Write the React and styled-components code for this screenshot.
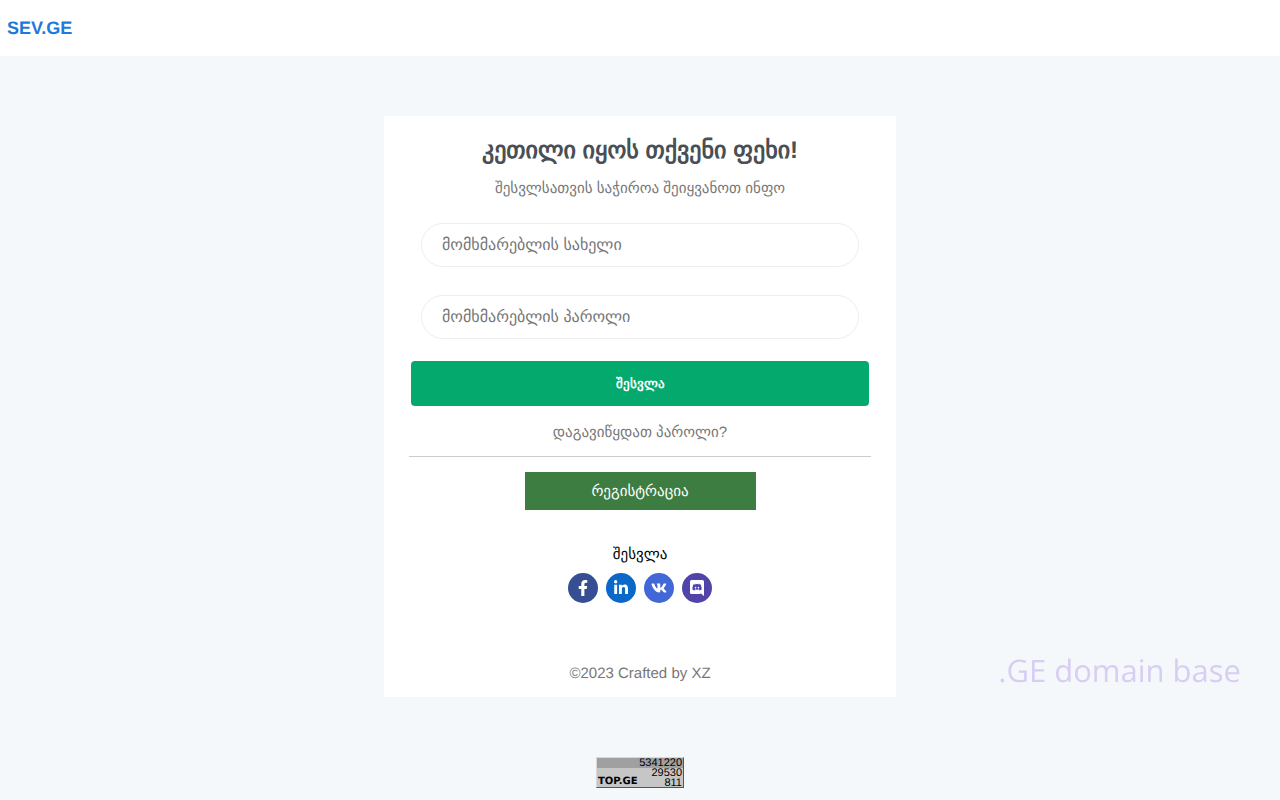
import styled, { createGlobalStyle } from 'styled-components';
import { FaFacebookF, FaLinkedinIn, FaVk } from 'react-icons/fa';

const colorText = '#777777';

const GlobalStyle = createGlobalStyle`
  * {
    box-sizing: border-box;
  }
  body {
    margin: 0;
    min-height: 100vh;
    background: #f4f8fb;
    font-family: "Liberation Sans", Arial, sans-serif;
    font-size: 15px;
    line-height: 22px;
    color: #000000;
    text-rendering: geometricPrecision;
  }
`;

//Header
const Header = styled.header`
  display: flex;
  align-items: center;
  height: 56px;
  padding: 0 7px;
  background: #ffffff;
`;
const Logo = styled.a`
  color: #1f78dd;
  font-size: 18px;
  font-weight: bold;
  text-decoration: none;
`;

//Login card
const Main = styled.main`
  display: flex;
  flex-direction: column;
  align-items: center;
  padding: 60px 0 12px;
`;
const Card = styled.section`
  display: flex;
  flex-direction: column;
  align-items: center;
  width: 40%;
  min-width: 320px;
  padding: 17px 25px 12px;
  background: #ffffff;
`;
const Title = styled.h1`
  margin: 0;
  color: #494f54;
  font-size: 24px;
  line-height: 36px;
  text-align: center;
`;
const Subtitle = styled.p`
  margin: 9px 0 23px;
  color: ${colorText};
  text-align: center;
`;
const Form = styled.form`
  display: flex;
  flex-direction: column;
  width: 100%;
  padding: 0 2px;
`;
const Input = styled.input`
  height: 44px;
  margin: 0 10px ${(props) => props.$gap};
  padding: 2px 20px 0;
  border: 1px solid #eeeeee;
  border-radius: 22px;
  background: #ffffff;
  font-family: inherit;
  font-size: 16px;
  text-rendering: inherit;
  outline: none;

  &::placeholder {
    color: #757575;
  }
`;
const SubmitButton = styled.button`
  height: 45px;
  border: 0;
  border-radius: 4px;
  color: #ffffff;
  background: #04aa6d;
  font-family: inherit;
  font-size: 13px;
  font-weight: bold;
  cursor: pointer;
`;
const ForgotLink = styled.a`
  margin: 16px 0 12px;
  color: ${colorText};
  text-decoration: none;
`;
const Divider = styled.hr`
  width: 100%;
  margin: 0 0 15px;
  border: 0;
  border-top: 1px solid #cccccc;
`;
const RegisterLink = styled.a`
  width: 50%;
  padding: 9px 0 7px;
  color: #ffffff;
  background: #3e7d41;
  text-align: center;
  text-decoration: none;
`;

//Social login
const SocialTitle = styled.p`
  margin: 34px 0 7px;
`;
const SocialList = styled.div`
  display: flex;
  gap: 8px;
`;
const SocialLink = styled.a`
  display: flex;
  align-items: center;
  justify-content: center;
  width: 30px;
  height: 30px;
  border-radius: 50%;
  color: #ffffff;
  background: ${(props) => props.$color};
  font-size: 16px;
`;
const Copyright = styled.p`
  margin: 60px 0 0;
  color: ${colorText};
`;

//Slogan over the page background
const Slogan = styled.div`
  position: fixed;
  right: 39px;
  bottom: 108px;
  color: #d8cdf3;
  font-family: "Open Sans", sans-serif;
  font-size: 31px;
  line-height: 42px;
`;

//TOP.GE counter
const Counter = styled.a`
  display: grid;
  grid-template-columns: 1fr auto;
  grid-template-rows: repeat(3, 10px);
  width: 88px;
  height: 31px;
  margin-top: 60px;
  padding: 0 1px;
  border: 1px solid;
  border-color: #d8d8d8 #555555 #555555 #d8d8d8;
  color: #000000;
  background: linear-gradient(#a0a0a0 10px, #c6c6c6 10px);
  font-size: 11px;
  line-height: 10px;
  text-decoration: none;
`;
const CounterValue = styled.span`
  grid-column: 2;
  text-align: right;
`;
const CounterName = styled.span`
  grid-column: 1;
  grid-row: 3;
  width: 0;
  font-family: "DejaVu Sans", sans-serif;
  font-size: 10px;
  line-height: 8px;
  font-weight: bold;
`;

const DiscordIcon = () => (
  <svg width="14" height="16" viewBox="0 0 448 512" fill="currentColor">
    <path d="M297.216 243.2c0 15.616-11.52 28.416-26.112 28.416-14.336 0-26.112-12.8-26.112-28.416s11.52-28.416 26.112-28.416c14.592 0 26.112 12.8 26.112 28.416zm-119.552-28.416c-14.592 0-26.112 12.8-26.112 28.416s11.776 28.416 26.112 28.416c14.592 0 26.112-12.8 26.112-28.416.256-15.616-11.52-28.416-26.112-28.416zM448 52.736V512c-64.494-56.994-43.868-38.128-118.784-107.776l13.568 47.36H52.48C23.552 451.584 0 428.032 0 398.848V52.736C0 23.552 23.552 0 52.48 0h343.04C424.448 0 448 23.552 448 52.736zm-72.96 242.688c0-82.432-36.864-149.248-36.864-149.248-36.864-27.648-71.936-26.88-71.936-26.88l-3.584 4.096c43.52 13.312 63.744 32.512 63.744 32.512-60.811-33.329-132.244-33.335-191.232-7.424-9.472 4.352-15.104 7.424-15.104 7.424s21.248-20.224 67.328-33.536l-2.56-3.072s-35.072-.768-71.936 26.88c0 0-36.864 66.816-36.864 149.248 0 0 21.504 37.12 78.08 38.912 0 0 9.472-11.52 17.152-21.248-32.512-9.728-44.8-30.208-44.8-30.208 3.766 2.636 9.976 6.053 10.496 6.4 43.21 24.198 104.588 32.126 159.744 8.96 8.96-3.328 18.944-8.192 29.44-15.104 0 0-12.8 20.992-46.336 30.464 7.68 9.728 16.896 20.736 16.896 20.736 56.576-1.792 78.336-38.912 78.336-38.912z" />
  </svg>
);

const socials = [
  { name: 'Facebook', color: '#364e92', Icon: FaFacebookF },
  { name: 'LinkedIn', color: '#0a68c8', Icon: FaLinkedinIn },
  { name: 'VK', color: '#4267d6', Icon: FaVk },
  { name: 'Discord', color: '#5144a8', Icon: DiscordIcon },
];

const App = () => (
  <>
    <GlobalStyle />
    <Header>
      <Logo href="/">SEV.GE</Logo>
    </Header>
    <Main>
      <Card>
        <Title>კეთილი იყოს თქვენი ფეხი!</Title>
        <Subtitle>შესვლსათვის საჭიროა შეიყვანოთ ინფო</Subtitle>
        <Form>
          <Input
            $gap="28px"
            type="text"
            placeholder="მომხმარებლის სახელი"
            aria-label="მომხმარებლის სახელი"
          />
          <Input
            $gap="22px"
            type="password"
            placeholder="მომხმარებლის პაროლი"
            aria-label="მომხმარებლის პაროლი"
          />
          <SubmitButton type="submit">შესვლა</SubmitButton>
        </Form>
        <ForgotLink href="#forgot">დაგავიწყდათ პაროლი?</ForgotLink>
        <Divider />
        <RegisterLink href="#register">რეგისტრაცია</RegisterLink>
        <SocialTitle>შესვლა</SocialTitle>
        <SocialList>
          {socials.map(({ name, color, Icon }) => (
            <SocialLink key={name} href={`#${name}`} aria-label={name} $color={color}>
              <Icon />
            </SocialLink>
          ))}
        </SocialList>
        <Copyright>©2023 Crafted by XZ</Copyright>
      </Card>
      <Counter href="#top">
        <CounterValue>5341220</CounterValue>
        <CounterValue>29530</CounterValue>
        <CounterName>TOP.GE</CounterName>
        <CounterValue>811</CounterValue>
      </Counter>
    </Main>
    <Slogan>.GE domain base</Slogan>
  </>
);

export default App;
